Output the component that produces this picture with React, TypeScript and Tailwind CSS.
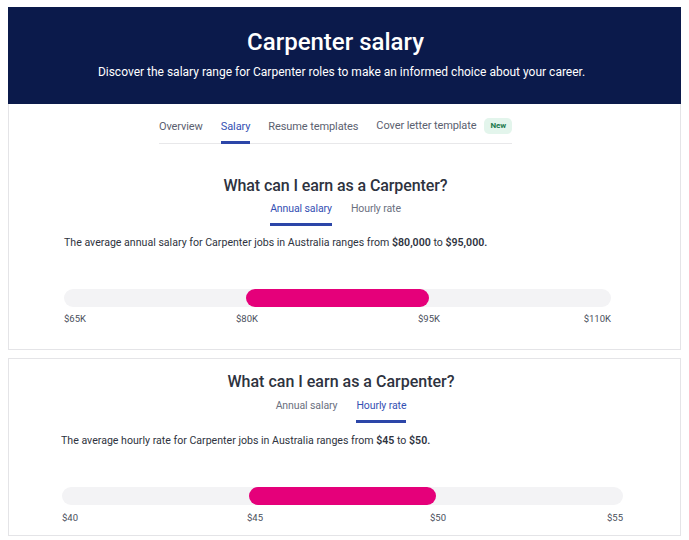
import React from "react";

function Bar({
  trackW,
  leftPct,
  widthPct,
  labels,
  positions,
  mt,
}: {
  trackW: number;
  leftPct: number;
  widthPct: number;
  labels: string[];
  positions: number[];
  mt: string;
}) {
  return (
    <div style={{ width: trackW }}>
      <div className="relative h-[18px] rounded-full bg-[#f3f3f5]">
        <div
          className="absolute top-0 h-[18px] rounded-full bg-[#e5007a]"
          style={{ left: `${leftPct}%`, width: `${widthPct}%` }}
        />
      </div>
      <div className={`relative h-[12px] text-[9.5px] leading-[12px] text-[#4a4f5c] ${mt}`}>
        {labels.map((l, i) => (
          <span
            key={l}
            className="absolute top-0"
            style={i === labels.length - 1 ? { right: 0 } : { left: positions[i] }}
          >
            {l}
          </span>
        ))}
      </div>
    </div>
  );
}

export default function App() {
  return (
    <div
      className="w-[689px] h-[540px] bg-white px-[8px] pt-[7px]"
      style={{ fontFamily: "Roboto, 'Noto Sans', sans-serif" }}
    >
      <div className="border border-[#e4e4e7] border-t-0 h-[343px]">
        <div className="h-[97px] bg-[#0b1a4b] flex flex-col items-center text-white -mx-px pr-[6px]">
          <div className="mt-[20px] mr-[12px] text-[24px] font-medium leading-[30px]">Carpenter salary</div>
          <div className="mt-[7px] text-[12px] leading-[16px]">
            Discover the salary range for Carpenter roles to make an informed choice about your career.
          </div>
        </div>
        <div className="flex justify-center mt-[15px] pr-[18px]">
          <div className="flex items-end gap-[18px] border-b border-[#e8e8ea] text-[11px] leading-[14px] tracking-[-0.1px] text-[#5b6170]">
            <div className="pb-[7px] border-b-[3px] border-transparent -mb-px">Overview</div>
            <div className="pb-[7px] border-b-[3px] border-[#2c46a8] text-[#3550b3] -mb-px">Salary</div>
            <div className="pb-[7px] border-b-[3px] border-transparent -mb-px">Resume templates</div>
            <div className="flex items-start gap-[8px] pb-[7px] border-b-[3px] border-transparent -mb-px">
              <span>Cover letter template</span>
              <span className="-mt-[1px] rounded-[5px] bg-[#e3f5ec] px-[6px] py-[2px] text-[8px] leading-[12px] font-bold text-[#1d7a4e]">
                New
              </span>
            </div>
          </div>
        </div>
        <div className="mt-[32px] pr-[18px] text-center text-[16px] font-medium leading-[20px] tracking-[-0.1px] text-[#2e3340]">
          What can I earn as a Carpenter?
        </div>
        <div className="flex justify-center gap-[19px] mt-[6px] pr-[18px] text-[10.5px] leading-[13px] tracking-[-0.1px] text-[#6b7080]">
          <div className="pb-[8px] border-b-[3px] border-[#2c46a8] text-[#3550b3]">Annual salary</div>
          <div className="pb-[8px] border-b-[3px] border-transparent">Hourly rate</div>
        </div>
        <div className="ml-[55px] mt-[10px] text-[10.6px] leading-[14px] text-[#2e3340]">
          The average annual salary for Carpenter jobs in Australia ranges from{" "}
          <b className="font-semibold">$80,000</b> to <b className="font-semibold">$95,000.</b>
        </div>
        <div className="ml-[55px] mt-[39px]">
          <Bar
            trackW={547}
            leftPct={33.3}
            widthPct={33.5}
            labels={["$65K", "$80K", "$95K", "$110K"]}
            positions={[0, 172, 354]}
            mt="mt-[6px]"
          />
        </div>
      </div>
      <div className="mt-[8px] border border-[#e4e4e7] h-[178px] flex flex-col">
        <div className="mt-[13px] pr-[7px] text-center text-[16px] font-medium leading-[20px] text-[#2e3340]">
          What can I earn as a Carpenter?
        </div>
        <div className="flex justify-center gap-[19px] mt-[7px] pr-[7px] text-[10.5px] leading-[13px] tracking-[-0.1px] text-[#6b7080]">
          <div className="pb-[8px] border-b-[3px] border-transparent">Annual salary</div>
          <div className="pb-[8px] border-b-[3px] border-[#2c46a8] text-[#3550b3]">Hourly rate</div>
        </div>
        <div className="ml-[52px] mt-[11px] text-[10.6px] leading-[14px] text-[#2e3340]">
          The average hourly rate for Carpenter jobs in Australia ranges from{" "}
          <b className="font-semibold">$45</b> to <b className="font-semibold">$50.</b>
        </div>
        <div className="ml-[53px] mt-[39px]">
          <Bar
            trackW={561}
            leftPct={33.3}
            widthPct={33.4}
            labels={["$40", "$45", "$50", "$55"]}
            positions={[0, 185, 368]}
            mt="mt-[7px]"
          />
        </div>
      </div>
    </div>
  );
}
